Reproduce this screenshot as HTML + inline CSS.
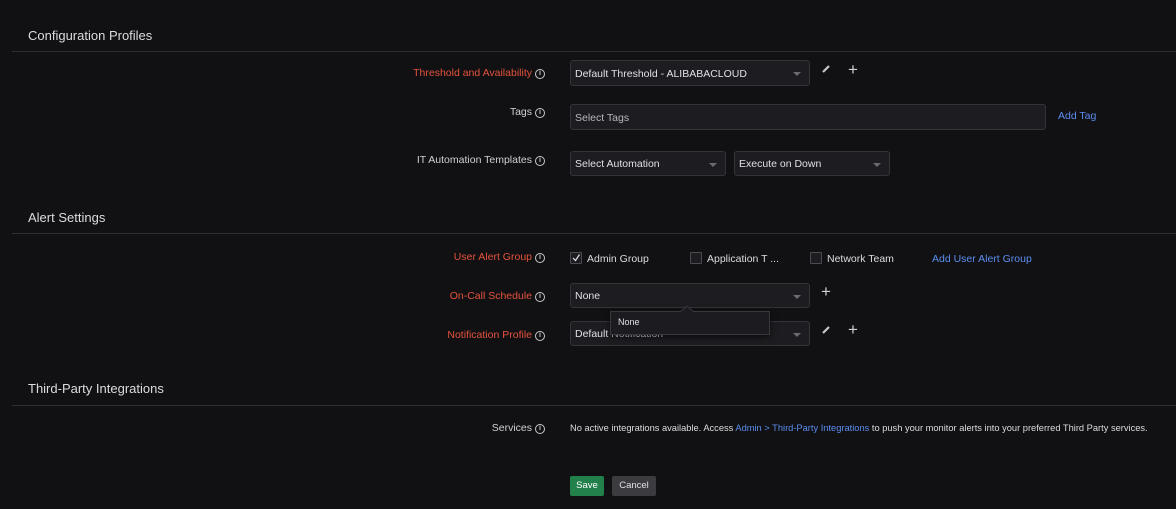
<!DOCTYPE html>
<html><head><style>
body{margin:0;background:#111113;width:1176px;height:509px;position:relative;overflow:hidden;font-family:"Liberation Sans",sans-serif;color:#d8d8dc}
.a{position:absolute}
.h{font-size:13px;color:#dcdce0;left:28px}
.line{left:12px;right:0;height:1px;background:#2e2e32}
.lbl{font-size:10.5px;right:631px;text-align:right;white-space:nowrap;color:#d0d0d4}
.red{color:#e5533d}
.i{display:inline-block;width:8px;height:8px;border:1px solid #c8c8cc;border-radius:50%;font-size:7px;line-height:8px;text-align:center;margin-left:3px;vertical-align:1px;color:#c8c8cc;font-weight:bold}
.box{background:#1d1d21;border:1px solid #333338;border-radius:3px;box-sizing:border-box;font-size:10.5px;line-height:24px;padding-left:4px;color:#e0e0e4}
.car{position:absolute;right:8px;top:11px;width:0;height:0;border-left:4px solid transparent;border-right:4px solid transparent;border-top:4px solid #6a6a70}
.link{color:#5b8def;font-size:10.5px}
.cb{width:10px;height:10px;border:1px solid #4a4a50;background:#1d1d21;border-radius:1px}
.t{font-size:10.5px;color:#dcdce0}
.plus{font-size:17px;color:#cfcfd3;font-weight:300}
</style></head><body>
<div class="a h" style="top:28px">Configuration Profiles</div>
<div class="a line" style="top:51px"></div>
<div class="a lbl red" style="top:67px">Threshold and Availability<span class="i">i</span></div>
<div class="a box" style="left:570px;top:60px;width:240px;height:26px;line-height:26px">Default Threshold - ALIBABACLOUD<span class="car"></span></div>
<svg class="a" style="left:821px;top:64px" width="10" height="10"><path d="M2 8 L8 2" stroke="#c8c8cc" stroke-width="2.2"/></svg>
<div class="a plus" style="left:848px;top:60px">+</div>

<div class="a lbl" style="top:106px">Tags<span class="i">i</span></div>
<div class="a box" style="left:570px;top:104px;width:476px;height:26px;line-height:26px;color:#b8b8bc">Select Tags</div>
<div class="a link" style="left:1058px;top:110px">Add Tag</div>

<div class="a lbl" style="top:154px">IT Automation Templates<span class="i">i</span></div>
<div class="a box" style="left:570px;top:151px;width:156px;height:25px;line-height:25px">Select Automation<span class="car"></span></div>
<div class="a box" style="left:734px;top:151px;width:156px;height:25px;line-height:25px">Execute on Down<span class="car"></span></div>

<div class="a h" style="top:210px">Alert Settings</div>
<div class="a line" style="top:233px"></div>
<div class="a lbl red" style="top:251px">User Alert Group<span class="i">i</span></div>
<div class="a cb" style="left:570px;top:252px"></div>
<svg class="a" style="left:571px;top:253px" width="10" height="10"><path d="M2 5 L4.5 7.5 L8.5 1.5" stroke="#e0e0e4" stroke-width="1.2" fill="none"/></svg>
<div class="a t" style="left:587px;top:253px">Admin Group</div>
<div class="a cb" style="left:690px;top:252px"></div>
<div class="a t" style="left:707px;top:253px">Application T ...</div>
<div class="a cb" style="left:810px;top:252px"></div>
<div class="a t" style="left:827px;top:253px">Network Team</div>
<div class="a link" style="left:932px;top:253px">Add User Alert Group</div>

<div class="a lbl red" style="top:290px">On-Call Schedule<span class="i">i</span></div>
<div class="a box" style="left:570px;top:283px;width:240px;height:25px;line-height:25px">None<span class="car"></span></div>
<div class="a plus" style="left:821px;top:282px">+</div>

<div class="a lbl red" style="top:329px">Notification Profile<span class="i">i</span></div>
<div class="a box" style="left:570px;top:321px;width:240px;height:25px;line-height:25px">Default Notification<span class="car"></span></div>
<svg class="a" style="left:821px;top:325px" width="10" height="10"><path d="M2 8 L8 2" stroke="#c8c8cc" stroke-width="2.2"/></svg>
<div class="a plus" style="left:848px;top:320px">+</div>

<div class="a" style="left:610px;top:311px;width:160px;height:24px;background:#1c1c20;border:1px solid #38383d;box-sizing:border-box;box-shadow:0 2px 6px rgba(0,0,0,.6);font-size:9px;line-height:21px;padding-left:7px;color:#e0e0e4">None</div>
<svg class="a" style="left:680px;top:306px" width="14" height="7"><path d="M0 6 L7 0 L14 6" fill="#1c1c20" stroke="#38383d"/></svg>

<div class="a h" style="top:381px">Third-Party Integrations</div>
<div class="a line" style="top:405px"></div>
<div class="a lbl" style="top:422px">Services<span class="i">i</span></div>
<div class="a" style="left:570px;top:423px;font-size:9.3px;color:#dcdce0;white-space:nowrap">No active integrations available. Access <span style="color:#5b8def">Admin &gt; Third-Party Integrations</span> to push your monitor alerts into your preferred Third Party services.</div>

<div class="a" style="left:570px;top:476px;width:34px;height:20px;background:#22804a;border-radius:2px;font-size:9.5px;line-height:20px;text-align:center;color:#fff">Save</div>
<div class="a" style="left:612px;top:476px;width:44px;height:20px;background:#3b3b40;border-radius:2px;font-size:9.5px;line-height:20px;text-align:center;color:#e0e0e4">Cancel</div>
</body></html>
